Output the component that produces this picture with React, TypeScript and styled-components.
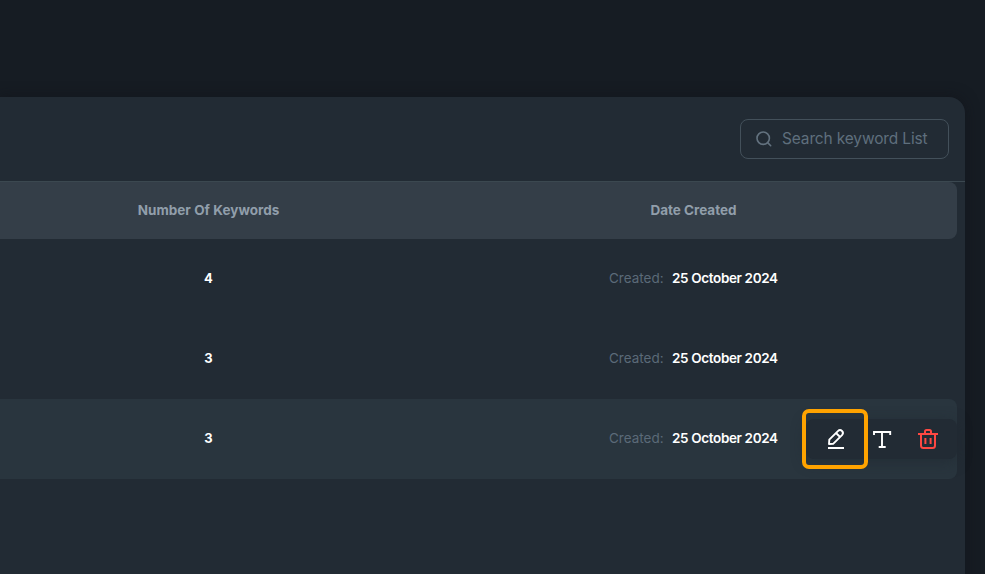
import React from "react";
import styled, { createGlobalStyle } from "styled-components";

const GlobalStyle = createGlobalStyle`
  * { box-sizing: border-box; }
  body {
    margin: 0;
    background: #161c23;
    font-family: Inter, "Liberation Sans", sans-serif;
    overflow: hidden;
  }
`;

const Page = styled.main`
  height: 574px;
  padding: 97px 20px 0 0;
  overflow: hidden;
`;

const Panel = styled.section`
  height: 500px;
  background: #222b34;
  border-radius: 0 16px 0 0;
  box-shadow: 0 0 14px rgba(16, 18, 25, 0.6);
`;

const Toolbar = styled.header`
  height: 85px;
  padding: 22px 16px 0 0;
  display: flex;
  justify-content: flex-end;
  border-bottom: 1px solid #3b4850;
`;

const SearchBox = styled.label`
  width: 209px;
  height: 40px;
  padding-left: 15px;
  display: flex;
  align-items: center;
  gap: 9px;
  border: 1px solid #43505a;
  border-radius: 8px;
`;

const SearchInput = styled.input`
  width: 156px;
  padding: 0;
  border: 0;
  outline: 0;
  background: transparent;
  font: 400 15.5px/20px Inter, "Liberation Sans", sans-serif;
  letter-spacing: -0.15px;
  &::placeholder { color: #5f6f7d; opacity: 1; }
`;

const Table = styled.div`
  padding-right: 8px;
`;

const Row = styled.div<{ $active?: boolean }>`
  position: relative;
  height: 80px;
  display: grid;
  grid-template-columns: 417px 393px;
  column-gap: 80px;
  align-items: center;
  justify-items: center;
  border-radius: 0 8px 8px 0;
  background: ${({ $active }) => ($active ? "#29353e" : "transparent")};
`;

const HeadRow = styled(Row)`
  height: 57px;
  background: #343e48;
`;

const HeadCell = styled.span<{ $spacing: number }>`
  color: #919eab;
  font-size: 13.5px;
  line-height: 20px;
  padding-bottom: 2px;
  font-weight: 650;
  letter-spacing: ${({ $spacing }) => $spacing}px;
`;

const Count = styled.span`
  color: #fff;
  font-size: 13px;
  line-height: 20px;
  padding-bottom: 2px;
  font-weight: 700;
`;

const DateCell = styled.div`
  display: flex;
  gap: 8px;
  font-size: 13.5px;
  line-height: 20px;
  padding-bottom: 2px;
  white-space: nowrap;
`;

const DateLabel = styled.span`
  width: 55px;
  color: #5b6a78;
  letter-spacing: 0;
`;

const DateValue = styled.span`
  width: 106px;
  color: #fff;
  font-weight: 600;
  letter-spacing: -0.36px;
`;

const Actions = styled.div`
  position: absolute;
  right: 0;
  top: 20px;
  width: 151px;
  height: 40px;
  display: flex;
  align-items: center;
  border-radius: 8px;
  background: #222b34;
  box-shadow: 0 3px 14px rgba(30, 38, 46, 0.5);
`;

const ActionButton = styled.button<{ $width: number; $color?: string }>`
  flex: none;
  width: ${({ $width }) => $width}px;
  height: 40px;
  padding: 0;
  display: flex;
  align-items: center;
  justify-content: center;
  border: 0;
  background: transparent;
  color: ${({ $color }) => $color ?? "#fff"};
  svg { display: block; }
`;

const Highlight = styled.div`
  position: absolute;
  left: -4px;
  top: -10px;
  width: 66px;
  height: 60px;
  border: 4px solid #ffa300;
  border-radius: 7px;
  pointer-events: none;
`;

const SearchIcon = () => (
  <svg width="17" height="17" viewBox="0 0 17 17" fill="none" stroke="#63727f" strokeWidth="1.6" strokeLinecap="round">
    <circle cx="7.2" cy="7.2" r="6.2" />
    <path d="M11.9 11.9 14.7 14.7" />
  </svg>
);

const PencilIcon = () => (
  <svg width="24" height="24" viewBox="0 0 24 24" fill="none" stroke="currentColor" strokeWidth="1.9" strokeLinejoin="round">
    <path d="M5 17 5.3 12.7 13.9 4.1Q16 2 18 4T18 8.1L9.4 16.7Z" />
    <path d="M12 6 16.1 10" />
    <path d="M4 21H20" strokeWidth="2" />
  </svg>
);

const TextIcon = () => (
  <svg width="24" height="24" viewBox="0 0 24 24" fill="none" stroke="currentColor" strokeWidth="1.9">
    <path d="M4 8V5H20.2V8M12 5V20M8.7 20H15.7" />
  </svg>
);

const TrashIcon = () => (
  <svg width="24" height="24" viewBox="0 0 24 24" fill="none" stroke="currentColor" strokeWidth="2">
    <path d="M2 7H22M9 6V4.6Q9 3 10.5 3H13.5Q15 3 15 4.6V6" />
    <path d="M5 7V18.5Q5 21 7.5 21H16.5Q19 21 19 18.5V7M9.4 11V17M14.6 11V17" />
  </svg>
);

const lists = [
  { id: 1, count: 4, date: "25 October 2024" },
  { id: 2, count: 3, date: "25 October 2024" },
  { id: 3, count: 3, date: "25 October 2024", active: true },
];

const RowActions = () => (
  <Actions>
    <ActionButton $width={60} aria-label="Edit"><PencilIcon /></ActionButton>
    <ActionButton $width={32} aria-label="Rename"><TextIcon /></ActionButton>
    <ActionButton $width={60} $color="#ff4842" aria-label="Delete"><TrashIcon /></ActionButton>
    <Highlight />
  </Actions>
);

export default function App() {
  return (
    <>
      <GlobalStyle />
      <Page>
        <Panel>
          <Toolbar>
            <SearchBox>
              <SearchIcon />
              <SearchInput placeholder="Search keyword List" />
            </SearchBox>
          </Toolbar>
          <Table>
            <HeadRow>
              <HeadCell $spacing={0.03}>Number Of Keywords</HeadCell>
              <HeadCell $spacing={0}>Date Created</HeadCell>
            </HeadRow>
            {lists.map((list) => (
              <Row key={list.id} $active={list.active}>
                <Count>{list.count}</Count>
                <DateCell>
                  <DateLabel>Created:</DateLabel>
                  <DateValue>{list.date}</DateValue>
                </DateCell>
                {list.active && <RowActions />}
              </Row>
            ))}
          </Table>
        </Panel>
      </Page>
    </>
  );
}
